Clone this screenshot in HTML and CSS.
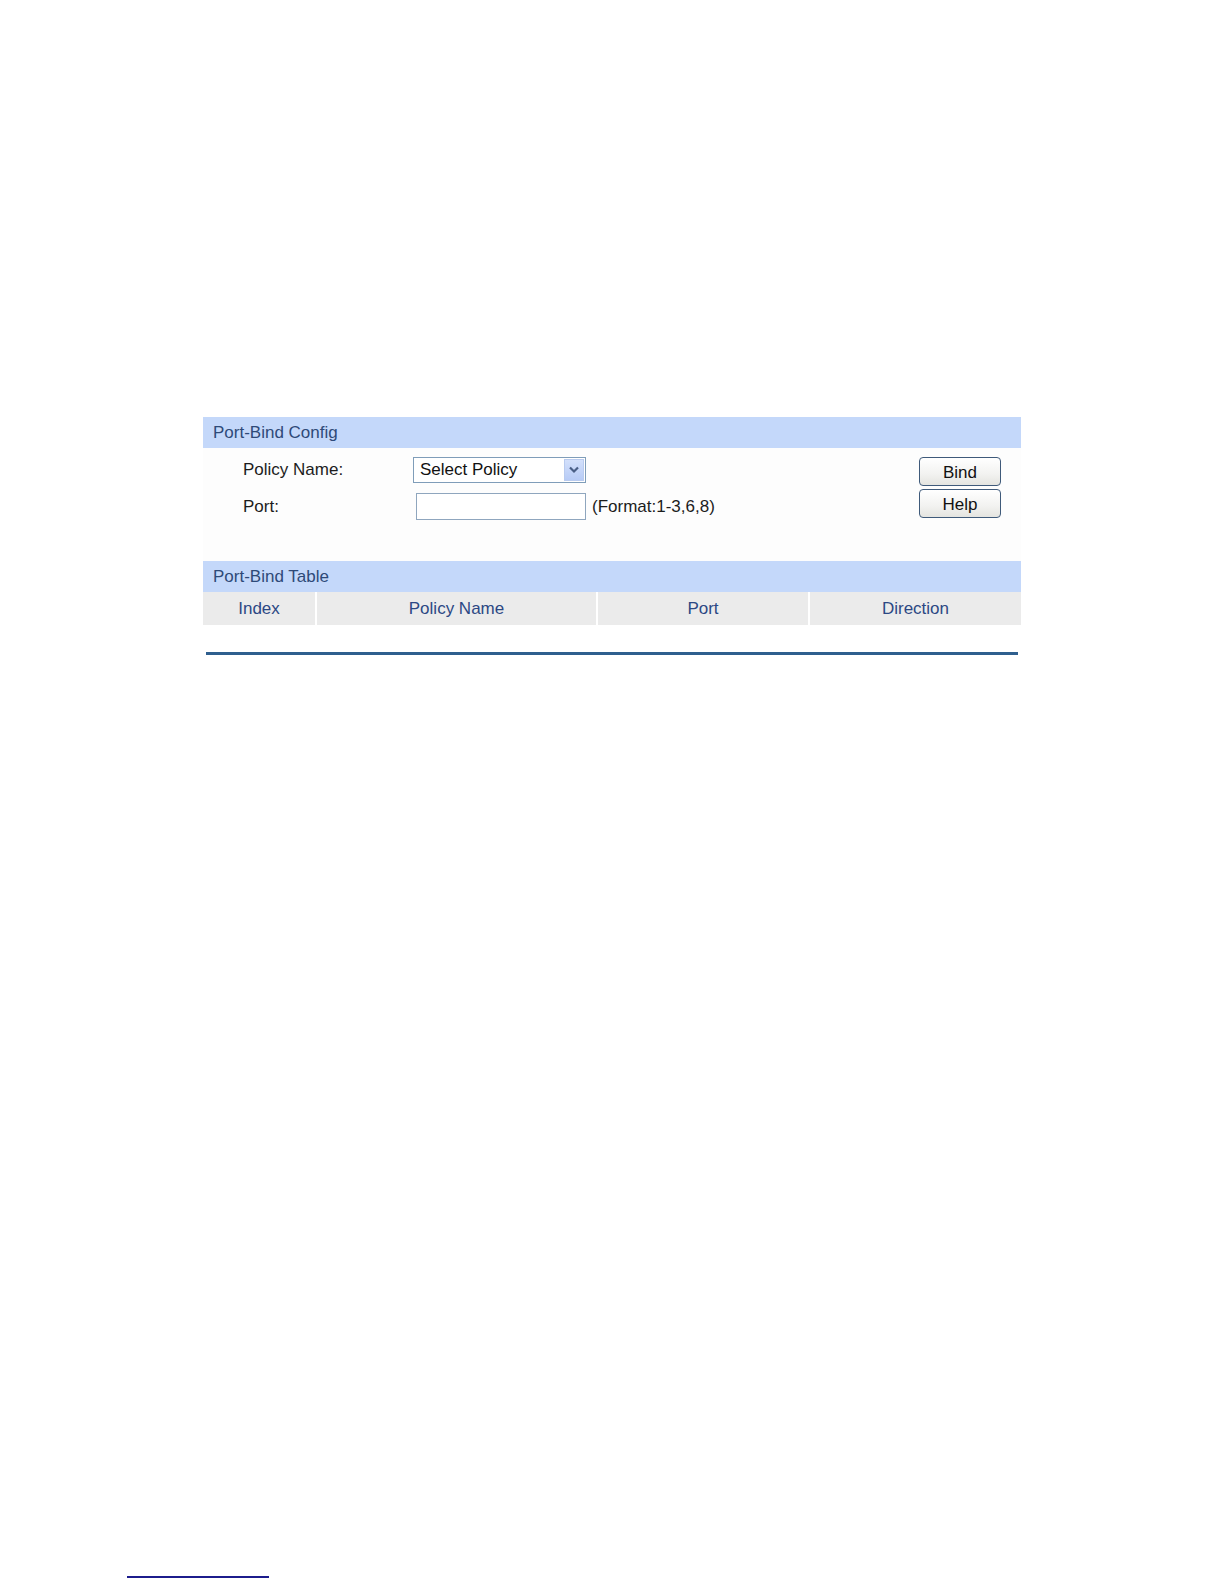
FILE: index.html
```html
<!DOCTYPE html>
<html lang="en">
<head>
<meta charset="utf-8">
<title>Port-Bind Config</title>
<link rel="stylesheet" href="styles.css">
</head>
<body>
<div class="page">
  <section class="panel">
    <div class="bar">Port-Bind Config</div>
    <div class="config">
      <div class="fields">
        <div class="row">
          <span class="label">Policy Name:</span>
          <div class="select">
            <span class="select-text">Select Policy</span>
            <span class="arrow">
              <svg width="10" height="8" viewBox="0 0 10 8"><path d="M1 1.5 L5 5.5 L9 1.5" fill="none" stroke="#4a5f86" stroke-width="2.2"/></svg>
            </span>
          </div>
        </div>
        <div class="row row-port">
          <span class="label">Port:</span>
          <span class="text-input"></span>
          <span class="hint">(Format:1-3,6,8)</span>
        </div>
      </div>
      <div class="buttons">
        <span class="btn">Bind</span>
        <span class="btn">Help</span>
      </div>
    </div>
    <div class="bar">Port-Bind Table</div>
    <div class="cols">
      <div class="col col-index">Index</div>
      <div class="col col-name">Policy Name</div>
      <div class="col col-port">Port</div>
      <div class="col col-dir">Direction</div>
    </div>
    <div class="rule"></div>
  </section>
  <div class="foot-rule"></div>
</div>
</body>
</html>
```
FILE: styles.css
```css
html, body {
  margin: 0;
  padding: 0;
  background: #ffffff;
}
body {
  font-family: "Liberation Sans", Arial, sans-serif;
  color: #1c1c1c;
}
.page {
  padding-top: 417px;
  width: 1224px;
  height: 1584px;
  box-sizing: border-box;
}
.panel {
  margin-left: 203px;
  width: 818px;
}
.bar {
  height: 31px;
  line-height: 32px;
  background: #c4d8fa;
  color: #2e4a78;
  font-size: 17px;
  padding-left: 10px;
}
.config {
  height: 113px;
  box-sizing: border-box;
  padding: 9px 20px 0 40px;
  display: flex;
  justify-content: space-between;
  background: #fdfdfd;
}
.fields {
  display: flex;
  flex-direction: column;
  gap: 10px;
}
.row {
  display: flex;
  align-items: center;
  font-size: 17px;
}
.label {
  width: 170px;
}
.select {
  width: 173px;
  height: 26px;
  box-sizing: border-box;
  border: 1px solid #7f9db9;
  background: #fff;
  display: flex;
  align-items: center;
  justify-content: space-between;
  padding: 0 1px 0 6px;
}
.select-text {
  font-size: 17px;
  color: #111;
}
.arrow {
  width: 20px;
  height: 22px;
  background: linear-gradient(#d3e0fb, #b7cbf6);
  border: 1px solid #b9cbef;
  box-sizing: border-box;
  display: flex;
  align-items: center;
  justify-content: center;
}
.row-port .label {
  width: 173px;
}
.text-input {
  width: 170px;
  height: 27px;
  box-sizing: border-box;
  border: 1px solid #8fa6be;
  background: #fff;
}
.hint {
  margin-left: 6px;
  font-size: 17px;
}
.buttons {
  display: flex;
  flex-direction: column;
  gap: 3px;
}
.btn {
  width: 82px;
  height: 29px;
  box-sizing: border-box;
  border: 1px solid #3f5a7a;
  border-radius: 4px;
  background: linear-gradient(#ffffff, #f2f2f0 60%, #e4e4e0);
  display: flex;
  align-items: center;
  justify-content: center;
  padding-top: 2px;
  font-size: 17px;
  color: #111;
}
.cols {
  display: flex;
  height: 33px;
  gap: 2px;
  background: #ffffff;
}
.col {
  background: #ebebeb;
  color: #2c4884;
  font-size: 17px;
  display: flex;
  align-items: center;
  justify-content: center;
}
.col-index { width: 112px; }
.col-name { width: 279px; }
.col-port { width: 210px; }
.col-dir { flex: 1; }
.rule {
  margin: 27px 3px 0 3px;
  height: 3px;
  background: #2f5f8e;
}
.foot-rule {
  margin-top: 921px;
  margin-left: 127px;
  width: 142px;
  height: 2px;
  background: #1c1c8c;
}
```
